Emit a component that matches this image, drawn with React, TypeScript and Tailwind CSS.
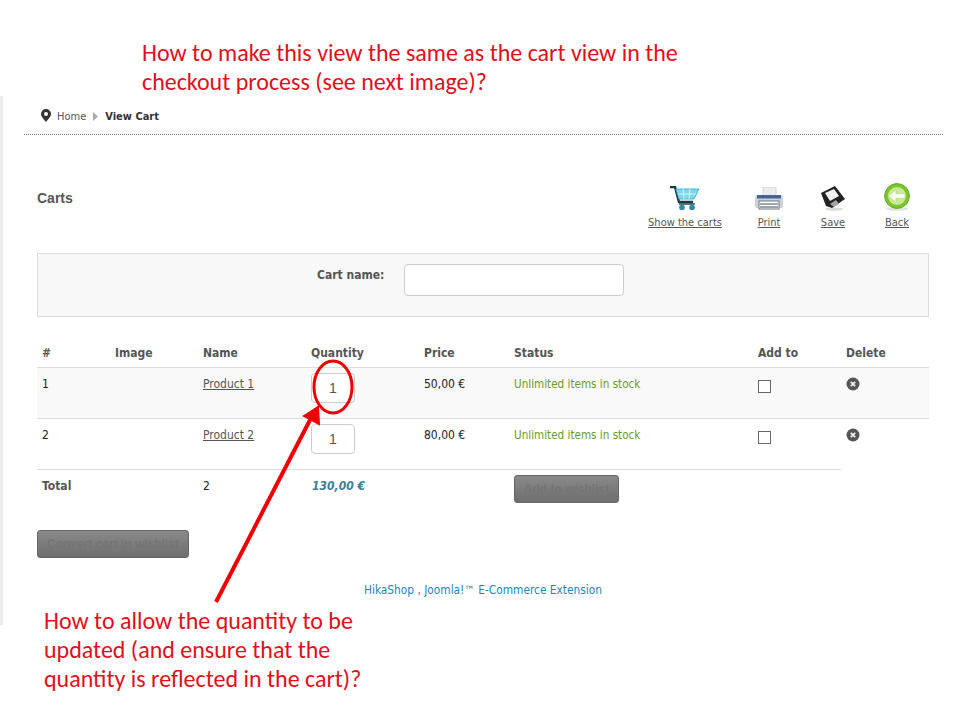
const ui = "font-['Tahoma','DejaVu_Sans_Condensed','Noto_Sans',sans-serif]"

const CartIcon = () => (
	<svg width="30" height="25" viewBox="0 0 30 25">
		<path d="M0 1h5l4 15h14" fill="none" stroke="#1c3a44" strokeWidth="2.4" />
		<path d="M6 3h23l-5 10H9z" fill="#7dd6ec" stroke="#48b4d0" strokeWidth="1" />
		<path d="M13 3l1 10M20 3l-1 10M8 8h18" stroke="#d8f3fa" strokeWidth="1" />
		<path d="M9 18h16" stroke="#1c3a44" strokeWidth="1.4" />
		<circle cx="12" cy="21.5" r="2.8" fill="#2f8aa6" />
		<circle cx="22" cy="21.5" r="2.8" fill="#2f8aa6" />
	</svg>
)

const PrintIcon = () => (
	<svg width="30" height="24" viewBox="0 0 30 24">
		<rect x="9" y="0" width="13" height="9" fill="#ececec" stroke="#d4d4d4" />
		<path d="M1 11q0-3 3-3h22q3 0 3 3v8q0 2-3 2H4q-3 0-3-2z" fill="#ccd1d8" />
		<rect x="3" y="8" width="24" height="3.5" fill="#46648f" />
		<rect x="5" y="14" width="20" height="8" fill="#fff" stroke="#6c7683" />
		<path d="M6 17h18M6 20h18" stroke="#3f4a58" strokeWidth="1" />
	</svg>
)

const SaveIcon = () => (
	<svg width="24" height="25" viewBox="0 0 24 25">
		<ellipse cx="13" cy="23" rx="9" ry="1.8" fill="#ddd" />
		<path d="M0 7 14 0l10 13-13 9-6-2z" fill="#222" />
		<path d="M4 7 13 3l5 7-9 5z" fill="#f2f2f2" />
		<path d="M9 18l6-4 3 4-5 3z" fill="#a5a5a5" />
	</svg>
)

const BackIcon = () => (
	<svg width="26" height="28" viewBox="0 0 26 28">
		<ellipse cx="13" cy="26" rx="11" ry="1.8" fill="#e2e2e2" />
		<circle cx="13" cy="13" r="12.4" fill="#7cc52c" stroke="#62aa20" />
		<circle cx="13" cy="13" r="9" fill="#c9ea96" />
		<path d="M4.5 13l7.5-6.5v4h9v5h-9v4z" fill="#f6f9ee" stroke="#aed478" strokeWidth="0.6" />
	</svg>
)

const DeleteIcon = () => (
	<svg width="14" height="14" viewBox="0 0 14 14">
		<circle cx="7" cy="7" r="6.5" fill="#555" />
		<path d="M4.8 4.8l4.4 4.4M9.2 4.8l-4.4 4.4" stroke="#eee" strokeWidth="1.8" />
	</svg>
)

const Tool = ({ icon, label, className }: { icon: React.ReactNode; label: string; className: string }) => (
	<a className={"flex flex-col items-center " + className}>
		<div className="h-[29px] flex items-end">{icon}</div>
		<span className="mt-[5px] whitespace-nowrap text-[11px] leading-[14px] underline text-[#555]">{label}</span>
	</a>
)

const Row = ({ n, name, price, shaded }: { n: string; name: string; price: string; shaded?: boolean }) => (
	<div className={"grid grid-cols-[73px_88px_108px_113px_90px_244px_88px_88px] h-[51px] pl-[5px] border-t border-[#dcdcdc] text-[12px] leading-[14px] text-[#222] " + (shaded ? "bg-[#f9f9f9]" : "")}>
		<span className="pt-[9px]">{n}</span>
		<span />
		<span className="pt-[9px] underline text-[#555]">{name}</span>
		<div className="pt-[5px]">
			<div className="w-[44px] h-[30px] border border-[#ccc] rounded-[4px] bg-white flex items-center justify-center text-[14px] text-[#555] font-['Liberation_Sans',sans-serif]">1</div>
		</div>
		<span className="pt-[9px]">{price}</span>
		<span className="pt-[9px] text-[11.6px] text-[#6a9a1f]">Unlimited items in stock</span>
		<div className="pt-[12px]">
			<div className="w-[13px] h-[13px] border border-[#666] bg-white" />
		</div>
		<div className="pt-[9px]"><DeleteIcon /></div>
	</div>
)

const DisabledButton = ({ label, className }: { label: string; className: string }) => (
	<button className={"h-[28px] rounded-[3px] border border-[#666] bg-gradient-to-b from-[#8a8a8a] to-[#6e6e6e] text-[12px] font-bold text-[#757575] font-['Liberation_Sans',sans-serif] " + className}>{label}</button>
)

export default function App() {
	return (
		<div className={"relative w-[960px] h-[720px] bg-white overflow-hidden " + ui}>
			{/* annotation, top */}
			<div className="h-[96px] pl-[142px] pt-[38px] text-[24px] leading-[29px] text-[#e0101c] font-['Carlito','Lato',sans-serif]">
				<p>How to make this view the same as the cart view in the</p>
				<p>checkout process (see next image)?</p>
			</div>

			<div className="flex">
				<div className="w-[3px] h-[529px] bg-[#ececec]" />
				<div className="ml-[21px] w-[919px]">
					{/* breadcrumb */}
					<div className="h-[39px] border-b border-dotted border-[#777] flex items-start pl-[17px] pt-[13px] text-[11px] leading-[14px] text-[#555]">
						<svg width="10" height="13" viewBox="0 0 10 13" className="mr-[6px]">
							<path fillRule="evenodd" d="M5 0a5 5 0 0 1 5 5c0 3-3 5-5 8-2-3-5-5-5-8a5 5 0 0 1 5-5zm0 3a2 2 0 1 0 0 4 2 2 0 0 0 0-4z" fill="#333" />
						</svg>
						<span className="mt-[1px]">Home</span>
						<svg width="5" height="9" viewBox="0 0 5 9" className="ml-[7px] mr-[7px] mt-[3px]"><path d="M0 0l5 4.5L0 9z" fill="#aaa" /></svg>
						<span className="mt-[1px] font-bold text-[#333]">View Cart</span>
					</div>

					<div className="pl-[13px] w-[905px]">
						{/* title + toolbar */}
						<div className="flex justify-between items-start h-[118px] pt-[47px]">
							<h1 className="mt-[7px] text-[14px] leading-[18px] font-bold text-[#555] font-['Liberation_Sans',sans-serif]">Carts</h1>
							<div className="flex pr-[17px]">
								<Tool icon={<CartIcon />} label="Show the carts" className="w-[72px]" />
								<Tool icon={<PrintIcon />} label="Print" className="w-[30px] ml-[33px]" />
								<Tool icon={<SaveIcon />} label="Save" className="w-[30px] ml-[34px]" />
								<Tool icon={<BackIcon />} label="Back" className="w-[30px] ml-[34px]" />
							</div>
						</div>

						{/* cart name */}
						<div className="h-[64px] w-[892px] border border-[#dcdcdc] bg-[#f8f8f8] flex items-start pl-[279px] pt-[10px]">
							<span className="mt-[4px] w-[87px] text-[12px] leading-[14px] font-bold text-[#555]">Cart name:</span>
							<div className="w-[220px] h-[32px] border border-[#ccc] rounded-[4px] bg-white" />
						</div>

						{/* table */}
						<div className="w-[892px] mt-[26px]">
							<div className="grid grid-cols-[73px_88px_108px_113px_90px_244px_88px_88px] h-[24px] pl-[5px] pt-[3px] text-[12px] leading-[14px] font-bold text-[#555]">
								<span>#</span>
								<span>Image</span>
								<span>Name</span>
								<span>Quantity</span>
								<span>Price</span>
								<span>Status</span>
								<span>Add to</span>
								<span>Delete</span>
							</div>
							<Row n="1" name="Product 1" price="50,00 €" shaded />
							<Row n="2" name="Product 2" price="80,00 €" />
							<div className="w-[804px] border-t border-[#dcdcdc] grid grid-cols-[73px_88px_108px_113px_90px_244px] h-[61px] pl-[5px] text-[12px] leading-[14px]">
								<span className="pt-[9px] font-bold text-[#555]">Total</span>
								<span />
								<span className="pt-[9px] text-[#222]">2</span>
								<span className="pt-[9px] pl-[1px] font-bold italic text-[#3d7f92]">130,00 €</span>
								<span />
								<div className="pt-[5px]"><DisabledButton label="Add to wishlist" className="w-[105px]" /></div>
							</div>
						</div>

						<DisabledButton label="Convert cart in wishlist" className="w-[152px]" />

						<p className="mt-[25px] ml-[327px] text-[11.8px] leading-[14px] text-[#1a87b8]">HikaShop , Joomla!™ E-Commerce Extension</p>
					</div>
				</div>
			</div>

			{/* annotation, bottom */}
			<div className="absolute left-[44px] top-[606px] text-[24px] leading-[29px] text-[#e0101c] font-['Carlito','Lato',sans-serif]">
				<p>How to allow the quantity to be</p>
				<p>updated (and ensure that the</p>
				<p>quantity is reflected in the cart)?</p>
			</div>

			{/* red arrow and ring */}
			<svg width="960" height="720" className="absolute left-0 top-0 pointer-events-none">
				<ellipse cx="333" cy="387" rx="19" ry="26" fill="none" stroke="#ee0000" strokeWidth="3" />
				<path d="M216 602 L311 418" stroke="#ee0000" strokeWidth="4" />
				<path d="M304 416 L318 407 L319 424 z" fill="#ee0000" stroke="#ee0000" strokeWidth="2" />
			</svg>
		</div>
	)
}
